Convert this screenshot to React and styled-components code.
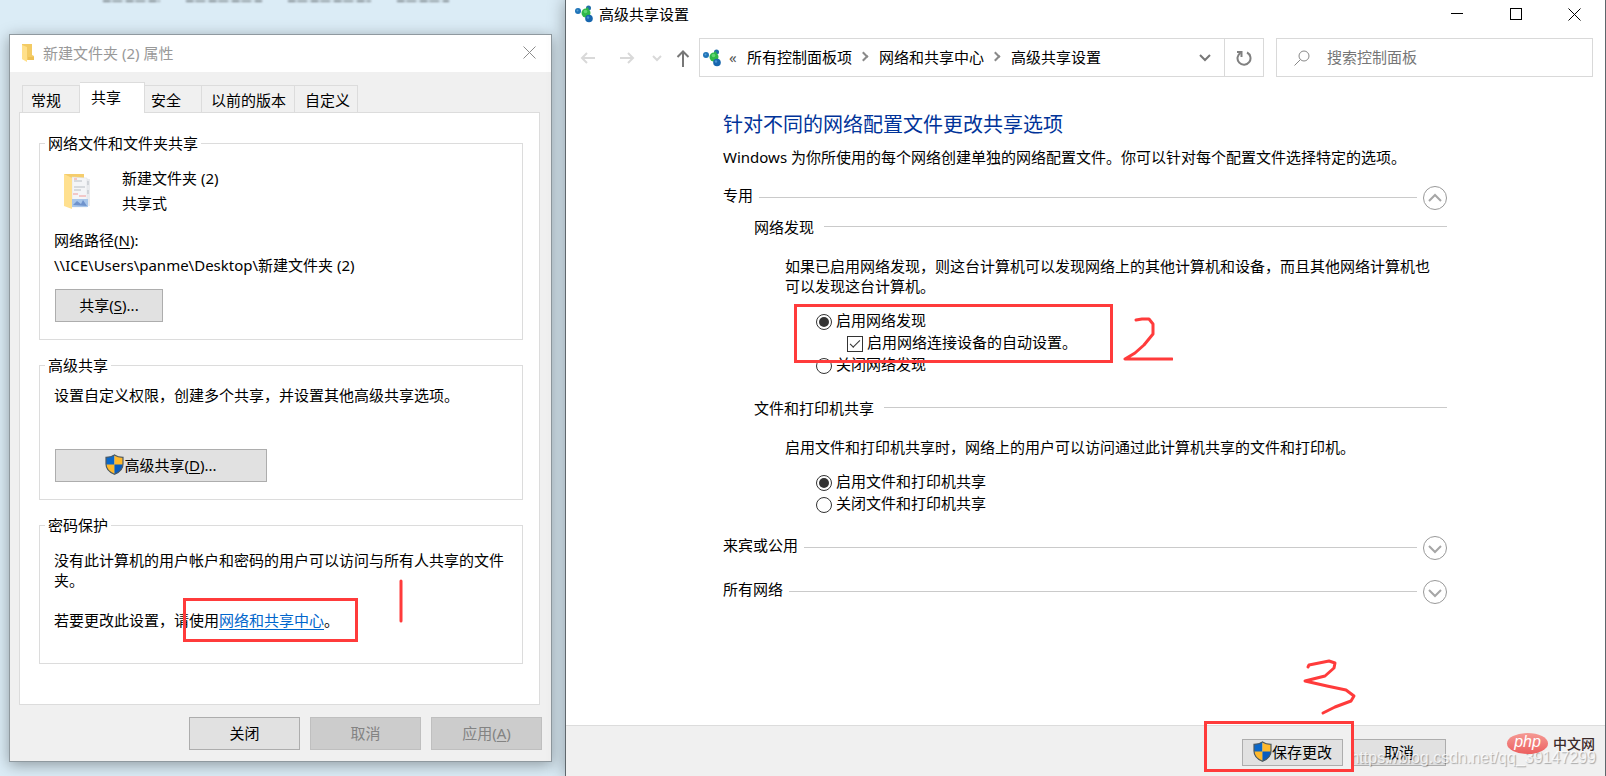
import React from 'react';
import styled, { createGlobalStyle } from 'styled-components';

const COLORS = {
  desktop: '#dbecf6',
  face: '#f0f0f0',
  line: '#dcdcdc',
  rule: '#cacaca',
  marker: '#ff3b3b',
  heading: '#003399',
  link: '#0066cc',
};

const TABS = ['常规', '共享', '安全', '以前的版本', '自定义'];
const CRUMBS = ['所有控制面板项', '网络和共享中心', '高级共享设置'];

const App = () => {
  return (
    <Desktop>
      <GlobalStyle />
      <IconLabels aria-hidden="true">
        <LabelEdge $width={57} />
        <LabelEdge $width={76} />
        <LabelEdge $width={83} />
        <LabelEdge $width={52} />
      </IconLabels>
      <PropertiesDialog />
      <SettingsWindow />
    </Desktop>
  );
};

const PropertiesDialog = () => {
  return (
    <Dialog>
      <DialogTitle>
        <SmallFolder />
        <span>新建文件夹 (2) 属性</span>
        <DialogClose aria-label="关闭窗口">
          <CrossIcon color="#8c8c8c" />
        </DialogClose>
      </DialogTitle>

      <TabList role="tablist">
        {TABS.map((tab) => (
          <Tab key={tab} role="tab" aria-selected={tab === '共享'}>
            {tab}
          </Tab>
        ))}
      </TabList>

      <TabPanel>
        <Group>
          <legend>网络文件和文件夹共享</legend>
          <FolderInfo>
            <SharedFolder />
            <div>
              <InfoLine>新建文件夹 (2)</InfoLine>
              <InfoLine>共享式</InfoLine>
            </div>
          </FolderInfo>
          <NetworkPath>
            <InfoLine>
              网络路径(<u>N</u>):
            </InfoLine>
            <InfoLine>\\ICE\Users\panme\Desktop\新建文件夹 (2)</InfoLine>
          </NetworkPath>
          <Button $width={108}>
            共享(<u>S</u>)...
          </Button>
        </Group>

        <Group>
          <legend>高级共享</legend>
          <AdvancedNote>设置自定义权限，创建多个共享，并设置其他高级共享选项。</AdvancedNote>
          <Button $width={212}>
            <Shield />
            高级共享(<u>D</u>)...
          </Button>
        </Group>

        <Group>
          <legend>密码保护</legend>
          <PasswordNote>
            没有此计算机的用户帐户和密码的用户可以访问与所有人共享的文件夹。
          </PasswordNote>
          <LinkNote>
            若要更改此设置，请使用
            <Marked>
              <TextLink href="#network">网络和共享中心</TextLink>
              <LinkBox />
              <StrokeOne viewBox="0 0 10 50">
                <path d="M5 4V44" />
              </StrokeOne>
            </Marked>
            。
          </LinkNote>
        </Group>
      </TabPanel>

      <DialogButtons>
        <Button $width={111}>关闭</Button>
        <Button $width={111} disabled>
          取消
        </Button>
        <Button $width={111} disabled>
          <span>
            应用(<u>A</u>)
          </span>
        </Button>
      </DialogButtons>
    </Dialog>
  );
};

const SettingsWindow = () => {
  return (
    <Window>
      <TitleBar>
        <NetworkIcon />
        <span>高级共享设置</span>
        <Controls>
          <button aria-label="最小化">
            <svg width="12" height="12">
              <path d="M0 5.5H12" stroke="#000" />
            </svg>
          </button>
          <button aria-label="最大化">
            <svg width="12" height="12">
              <rect x="0.5" y="0.5" width="11" height="11" fill="none" stroke="#000" />
            </svg>
          </button>
          <button aria-label="关闭">
            <CrossIcon color="#000" />
          </button>
        </Controls>
      </TitleBar>

      <Toolbar>
        <NavButtons>
          <button aria-label="后退" disabled>
            <svg width="16" height="16" fill="none" stroke="#d9d9d9" strokeWidth="2">
              <path d="M7 3L2 8L7 13M2 8H15" />
            </svg>
          </button>
          <button aria-label="前进" disabled>
            <svg width="16" height="16" fill="none" stroke="#d9d9d9" strokeWidth="2">
              <path d="M9 3L14 8L9 13M14 8H1" />
            </svg>
          </button>
          <button aria-label="最近" disabled>
            <svg width="10" height="16" fill="none" stroke="#d9d9d9" strokeWidth="2">
              <path d="M1 6L5 10L9 6" />
            </svg>
          </button>
          <button aria-label="向上">
            <svg width="14" height="18" fill="none" stroke="#777" strokeWidth="2">
              <path d="M1.500 8L7 2.500L12.500 8M7 3V18" />
            </svg>
          </button>
        </NavButtons>
        <AddressBar>
          <NetworkIcon />
          <BackMark>«</BackMark>
          <Crumbs aria-label="路径">
            {CRUMBS.map((crumb) => (
              <Crumb key={crumb}>
                <a href="#crumb">{crumb}</a>
              </Crumb>
            ))}
          </Crumbs>
          <DropButton aria-label="以前的位置">
            <svg width="12" height="8" fill="none" stroke="#777" strokeWidth="2">
              <path d="M1 1L6 6L11 1" />
            </svg>
          </DropButton>
          <RefreshButton aria-label="刷新">
            <svg width="16" height="16" fill="none" stroke="#808080" strokeWidth="2">
              <path d="M11 2.500A6.500 6.500 0 1 1 4.500 2.800" />
              <path d="M1 2H5.500V7" />
            </svg>
          </RefreshButton>
        </AddressBar>
        <SearchBox>
          <svg width="16" height="16" fill="none" stroke="#888">
            <circle cx="10" cy="6" r="5" />
            <path d="M6.500 9.500L0.500 15.500" />
          </svg>
          <input aria-label="搜索控制面板" placeholder="搜索控制面板" />
        </SearchBox>
      </Toolbar>

      <Content>
        <h1>针对不同的网络配置文件更改共享选项</h1>
        <Intro>
          Windows 为你所使用的每个网络创建单独的网络配置文件。你可以针对每个配置文件选择特定的选项。
        </Intro>

        <ProfileHeader title="专用" expanded />
        <Section>
          <SectionTitle>网络发现</SectionTitle>
          <SectionBody>
            <p>
              如果已启用网络发现，则这台计算机可以发现网络上的其他计算机和设备，而且其他网络计算机也可以发现这台计算机。
            </p>
            <Options>
              <Option>
                <input type="radio" name="discovery" defaultChecked />
                启用网络发现
              </Option>
              <Option $nested>
                <input type="checkbox" defaultChecked />
                启用网络连接设备的自动设置。
              </Option>
              <Option>
                <input type="radio" name="discovery" />
                关闭网络发现
              </Option>
              <OptionsBox />
              <StrokeTwo viewBox="0 0 52 48">
                <path d="M15 6L21 5L28 5L32 10L32 20L23 31L14 39L4 45L51 45" />
              </StrokeTwo>
            </Options>
          </SectionBody>
        </Section>
        <Section $spaced>
          <SectionTitle>文件和打印机共享</SectionTitle>
          <SectionBody>
            <p>启用文件和打印机共享时，网络上的用户可以访问通过此计算机共享的文件和打印机。</p>
            <Options>
              <Option>
                <input type="radio" name="printer" defaultChecked />
                启用文件和打印机共享
              </Option>
              <Option>
                <input type="radio" name="printer" />
                关闭文件和打印机共享
              </Option>
            </Options>
          </SectionBody>
        </Section>

        <ProfileHeader title="来宾或公用" />
        <ProfileHeader title="所有网络" />
      </Content>

      <Footer>
        <FooterButtons>
          <Marked>
            <Button $width={101} $short>
              <Shield />
              保存更改
            </Button>
            <SaveBox />
            <StrokeThree viewBox="0 0 56 60">
              <path d="M7 10L8 8L28 4L34 6L33 11L24 19L16 21L4 24L26 29L45 33L53 39L50 44L34 50L22 56" />
            </StrokeThree>
          </Marked>
          <Button $width={94} $short>
            取消
          </Button>
        </FooterButtons>
        <Watermark>https://blog.csdn.net/qq_39147299</Watermark>
        <Brand>
          <BrandOval>php</BrandOval>
          中文网
        </Brand>
      </Footer>
    </Window>
  );
};

const ProfileHeader = ({ title, expanded }) => (
  <ProfileRow>
    <h2>{title}</h2>
    <button aria-label={title} aria-expanded={!!expanded}>
      <svg width="24" height="24" fill="none" stroke="#999">
        <circle cx="12" cy="12" r="11.500" />
        <path
          d={expanded ? 'M6 15L12 9L18 15' : 'M6 10L12 16L18 10'}
          stroke="#a6a6a6"
          strokeWidth="2"
        />
      </svg>
    </button>
  </ProfileRow>
);

const CrossIcon = ({ color }) => (
  <svg width="13" height="13" stroke={color}>
    <path d="M0.500 0.500L12.500 12.500M12.500 0.500L0.500 12.500" />
  </svg>
);

const Shield = () => (
  <svg width="19" height="21" viewBox="0 0 19 21">
    <path d="M9.500 0.500C7 2.500 4 3 1 3V10C1 15 4.500 18.500 9.500 20.500Z" fill="#0a67c9" />
    <path d="M9.500 0.500C12 2.500 15 3 18 3V10C18 15 14.500 18.500 9.500 20.500Z" fill="#ffb92c" />
    <path d="M1 10.500H9.500V20.500C4.500 18.500 1.200 15 1 10.500Z" fill="#ffb92c" />
    <path d="M18 10.500H9.500V20.500C14.500 18.500 17.800 15 18 10.500Z" fill="#0a5cbf" />
    <path
      d="M9.500 1C7 2.800 4 3.300 1 3.300V10C1 15 4.500 18.300 9.500 20.200C14.500 18.300 18 15 18 10V3.300C15 3.300 12 2.800 9.500 1Z"
      fill="none"
      stroke="#4d5a63"
      strokeWidth="1.200"
    />
  </svg>
);

const NetworkIcon = () => (
  <svg width="20" height="18" viewBox="0 0 20 18">
    <circle cx="4" cy="6" r="3" fill="#1f74b8" />
    <circle cx="14.500" cy="3" r="2.500" fill="#226fa8" />
    <path d="M8 7L14 2L16 12L12 13Z" fill="#2fb84a" />
    <circle cx="12" cy="8" r="4.500" fill="#2fb84a" />
    <circle cx="15" cy="13.500" r="3.800" fill="#1766ae" />
    <circle cx="11.500" cy="6.500" r="1.800" fill="#62d673" />
    <circle cx="14" cy="12.500" r="1.200" fill="#4a93d0" />
    <circle cx="3.500" cy="5.500" r="1" fill="#5a9fd4" />
  </svg>
);

const SmallFolder = () => (
  <svg width="12" height="18" viewBox="0 0 12 18">
    <path d="M0 0H10V11L12 12V16H4L0 15Z" fill="#f3cb64" />
    <path d="M0 1L5 3V18L0 15Z" fill="#ffe08a" />
    <path d="M6 13H12V16H6Z" fill="#eec053" />
  </svg>
);

const SharedFolder = () => (
  <svg width="28" height="36" viewBox="0 0 28 36">
    <path d="M0 1H20V33H6Z" fill="#f5cd6c" />
    <path d="M11 5L26 6V33L11 34Z" fill="#e9ebee" />
    <path d="M8 4L23 5V34H8Z" fill="#f4f5f7" stroke="#dcdfe3" strokeWidth="0.500" />
    <path d="M10 8H18M10 14H21M10 17H17M24 8V12M24 17V21" stroke="#b9bec4" />
    <path d="M10 6H13M9 21H14M15 23H22" stroke="#ef9a9a" />
    <path d="M8 26H24V34H8Z" fill="#a8c6ea" />
    <path d="M9 32L13 28L17 31L19 27L23 33Z" fill="#6f93cc" />
    <path d="M0 1L8 5V36L0 33Z" fill="#ffe08f" />
  </svg>
);

const GlobalStyle = createGlobalStyle`
  *,
  *::before,
  *::after {
    box-sizing: border-box;
  }

  body {
    margin: 0;
    background: ${COLORS.desktop};
    color: #000;
    font-family: 'Noto Sans', 'Noto Sans CJK SC', sans-serif;
    font-size: 15px;
    line-height: 20px;
  }

  h1, h2, h3, p {
    margin: 0;
    font-size: 15px;
    font-weight: 400;
  }

  button, input {
    margin: 0;
    padding: 0;
    border: 0;
    background: none;
    color: inherit;
    font: inherit;
  }

  svg {
    display: block;
    flex: none;
  }

  u {
    text-underline-offset: 2px;
  }
`;

const Desktop = styled.div`
  position: relative;
  display: grid;
  grid-template-columns: minmax(0, 565fr) minmax(0, 1041fr);
  align-items: start;
  min-height: 100vh;
  overflow: hidden;
`;

/* The lower edge of the desktop icon labels, cut off by the screen */
const IconLabels = styled.div`
  position: absolute;
  top: 0;
  left: 103px;
  display: flex;
  gap: 26px;
`;

const LabelEdge = styled.span`
  width: ${(p) => p.$width}px;
  height: 2px;
  background: repeating-linear-gradient(90deg, #7d878d 0 7px, #b4c1c9 7px 10px, #8f9aa0 10px 19px, #cbdae3 19px 23px);
  filter: blur(1px);
`;

const Dialog = styled.section`
  margin: 34px 13px 14px 9px;
  border: 1px solid #8f999f;
  background: ${COLORS.face};
  box-shadow: 0 3px 14px rgba(0, 0, 0, 0.35);
`;

const DialogTitle = styled.header`
  display: flex;
  align-items: center;
  gap: 9px;
  height: 37px;
  padding: 0 15px 2px 12px;
  background: #fff;
  color: #999;
`;

const DialogClose = styled.button`
  margin-left: auto;
`;

const TabList = styled.div`
  display: flex;
  align-items: flex-end;
  height: 40px;
  padding-left: 12px;
`;

const Tab = styled.button`
  height: 27px;
  padding: 2px 14px 0 10px;
  border: 1px solid ${COLORS.line};
  border-width: 1px 1px 0 0;
  white-space: nowrap;

  &:first-child {
    padding: 2px 18px 0 8px;
    border-left-width: 1px;
  }

  &:nth-child(3) {
    padding: 2px 20px 0 6px;
  }

  &:nth-child(4) {
    padding: 2px 8px 0 9px;
  }

  &:nth-child(5) {
    padding-right: 7px;
  }

  &[aria-selected='true'] {
    height: 31px;
    margin-bottom: -1px;
    padding: 0 23px 2px 11px;
    background: #fff;
  }
`;

const TabPanel = styled.div`
  display: flex;
  flex-direction: column;
  gap: 15px;
  margin: 0 11px 0 9px;
  padding: 20px 16px 40px 19px;
  border: 1px solid ${COLORS.line};
  background: #fff;
`;

const Button = styled.button`
  display: inline-flex;
  align-items: center;
  justify-content: center;
  width: ${(p) => p.$width}px;
  height: ${(p) => (p.$short ? 27 : 33)}px;
  padding-bottom: 2px;
  border: 1px solid #adadad;
  background: #e1e1e1;
  white-space: nowrap;

  &:disabled {
    border-color: #bfbfbf;
    background: #ccc;
    color: #838383;
  }
`;

const Group = styled.fieldset`
  min-width: 0;
  margin: 0;
  padding: 0 14px 17px;
  border: 1px solid ${COLORS.line};

  legend {
    margin-left: -9px;
    padding: 0 3px;
  }

  & > ${Button} {
    margin-left: 1px;
  }

  &:last-child {
    padding-bottom: 33px;
  }
`;

const FolderInfo = styled.div`
  display: flex;
  align-items: center;
  gap: 30px;
  padding: 13px 0 0 10px;
`;

const InfoLine = styled.div`
  line-height: 25px;
`;

const NetworkPath = styled.div`
  padding: 12px 0 11px;
`;

const AdvancedNote = styled.p`
  padding: 10px 0 44px;
`;

const PasswordNote = styled.p`
  padding-top: 15px;
`;

const LinkNote = styled.p`
  padding-top: 20px;
`;

const TextLink = styled.a`
  color: ${COLORS.link};
  text-underline-offset: 3px;
`;

const DialogButtons = styled.div`
  display: flex;
  justify-content: flex-end;
  gap: 10px;
  padding: 12px 9px 11px;
`;

const Marked = styled.span`
  position: relative;
`;

const MarkerBox = styled.span`
  position: absolute;
  z-index: 1;
  border: 3px solid ${COLORS.marker};
  pointer-events: none;
`;

const LinkBox = styled(MarkerBox)`
  inset: -12px -34px -12px -36px;
`;

const OptionsBox = styled(MarkerBox)`
  top: -6px;
  left: -22px;
  width: 319px;
  height: 59px;
`;

const SaveBox = styled(MarkerBox)`
  inset: -18px -11px -6px -38px;
`;

const MarkerStroke = styled.svg`
  position: absolute;
  z-index: 1;
  fill: none;
  stroke: ${COLORS.marker};
  stroke-width: 3px;
  stroke-linecap: round;
  stroke-linejoin: round;
  pointer-events: none;
`;

const StrokeOne = styled(MarkerStroke)`
  top: -33px;
  left: 177px;
  width: 10px;
  height: 50px;
`;

const StrokeTwo = styled(MarkerStroke)`
  top: 4px;
  left: 305px;
  width: 52px;
  height: 48px;
`;

const StrokeThree = styled(MarkerStroke)`
  top: -82px;
  left: 59px;
  width: 56px;
  height: 60px;
`;

const Window = styled.main`
  position: relative;
  display: flex;
  flex-direction: column;
  min-height: 100vh;
  border: 1px solid #5f676c;
  border-width: 0 1px;
  background: #fff;
  box-shadow: 0 0 16px rgba(0, 0, 0, 0.35);
`;

const TitleBar = styled.header`
  display: flex;
  align-items: center;
  gap: 5px;
  height: 28px;
  padding-left: 8px;
`;

const Controls = styled.div`
  display: flex;
  margin: 0 1px 0 auto;

  button {
    display: grid;
    place-items: center;
    width: 59px;
    height: 28px;
  }
`;

const Toolbar = styled.div`
  display: grid;
  grid-template-columns: 107px minmax(0, 565fr) minmax(0, 317fr);
  gap: 12px;
  height: 39px;
  margin: 10px 12px 0 14px;
`;

const NavButtons = styled.div`
  display: flex;
  align-items: center;
  gap: 14px;

  button:nth-child(2) {
    margin-left: 9px;
  }

  button:nth-child(3) {
    margin-left: 3px;
  }
`;

const AddressBar = styled.div`
  display: flex;
  align-items: center;
  padding-left: 2px;
  border: 1px solid #d9d9d9;
`;

const BackMark = styled.span`
  width: 25px;
  padding: 0 0 2px 7px;
  color: #555;
`;

const Crumbs = styled.nav`
  display: flex;
  flex: 1;
  min-width: 0;
  padding-bottom: 2px;
`;

const Crumb = styled.span`
  display: flex;
  align-items: center;
  white-space: nowrap;

  a {
    color: inherit;
    text-decoration: none;
  }

  & + &::before {
    content: '';
    width: 7px;
    height: 7px;
    margin: 0 12px 0 8px;
    border: solid #8a8a8a;
    border-width: 2px 2px 0 0;
    transform: rotate(45deg);
  }
`;

const DropButton = styled.button`
  padding: 0 13px;
`;

const RefreshButton = styled.button`
  display: grid;
  place-items: center;
  align-self: stretch;
  width: 39px;
  border-left: 1px solid #d9d9d9;
`;

const SearchBox = styled.label`
  display: flex;
  align-items: center;
  gap: 17px;
  padding-left: 17px;
  border: 1px solid #d9d9d9;

  input {
    flex: 1;
    min-width: 0;
    padding-bottom: 2px;
    outline: 0;
  }

  input::placeholder {
    color: #767676;
    opacity: 1;
  }
`;

const Content = styled.div`
  flex: 1;
  width: 100%;
  max-width: 725px;
  margin: 0 auto;
  padding: 35px 1px 40px 0;

  h1 {
    color: ${COLORS.heading};
    font-size: 20px;
    line-height: 26px;
  }
`;

const Intro = styled.p`
  padding: 9px 0 19px;
`;

const ProfileRow = styled.div`
  display: flex;
  gap: 6px;
  height: 24px;

  h2 {
    line-height: 18px;
  }

  &::before {
    content: '';
    flex: 1;
    order: 1;
    height: 1px;
    margin-top: 11px;
    background: ${COLORS.rule};
  }

  button {
    order: 2;
  }

  div + & {
    margin-top: 20px;
  }
`;

const Section = styled.section`
  padding: ${(p) => (p.$spaced ? '22px 0 21px 31px' : '7px 0 0 31px')};
`;

const SectionTitle = styled.h3`
  display: flex;
  gap: 10px;

  &::after {
    content: '';
    flex: 1;
    height: 1px;
    margin-top: 9px;
    background: ${COLORS.rule};
  }
`;

const SectionBody = styled.div`
  padding: 19px 8px 0 31px;
`;

const Options = styled.div`
  position: relative;
  display: flex;
  flex-direction: column;
  align-items: flex-start;
  margin: 14px 0 0 31px;
`;

const Option = styled.label`
  display: flex;
  align-items: flex-start;
  gap: 4px;
  height: 22px;
  margin-left: ${(p) => (p.$nested ? 31 : 0)}px;

  input {
    display: grid;
    place-items: center;
    width: 16px;
    height: 16px;
    margin-top: 4px;
    border: 1px solid #333;
    background: #fff;
    appearance: none;
  }

  input[type='radio'] {
    border-radius: 50%;
  }

  input[type='radio']:checked::after {
    content: '';
    width: 10px;
    height: 10px;
    border-radius: 50%;
    background: #333;
  }

  input[type='checkbox']:checked::after {
    content: '';
    width: 10px;
    height: 5px;
    margin-bottom: 3px;
    border: solid #333;
    border-width: 0 0 1px 1px;
    transform: rotate(-45deg);
  }
`;

const Footer = styled.footer`
  position: relative;
  padding: 13px 0 10px;
  border-top: 1px solid ${COLORS.line};
  background: ${COLORS.face};
`;

const FooterButtons = styled.div`
  display: flex;
  justify-content: flex-end;
  gap: 9px;
  max-width: 725px;
  height: 27px;
  margin: 0 auto;
  padding-right: 2px;
`;

const Watermark = styled.span`
  position: absolute;
  right: 9px;
  bottom: 8px;
  color: rgba(255, 255, 255, 0.75);
  font-family: 'Liberation Sans', Arial, sans-serif;
  font-size: 16px;
  text-shadow: 1px 1px 1px rgba(0, 0, 0, 0.3);
`;

const Brand = styled.span`
  position: absolute;
  right: 10px;
  bottom: 22px;
  display: flex;
  align-items: center;
  gap: 5px;
  color: #3b2a2a;
  font-size: 14px;
  font-weight: 500;
`;

const BrandOval = styled.span`
  width: 41px;
  height: 21px;
  border-radius: 50%;
  background: linear-gradient(#f59a94, #ec5f5f);
  color: #fff;
  font-family: 'Liberation Sans', Arial, sans-serif;
  font-size: 16px;
  font-style: italic;
  line-height: 18px;
  text-align: center;
`;

export default App;
